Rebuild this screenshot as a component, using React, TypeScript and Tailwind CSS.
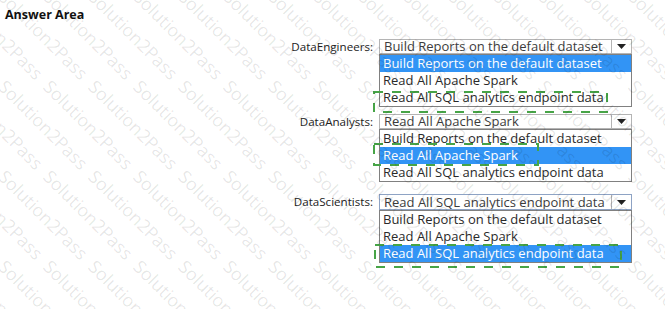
import React from "react";

const OPTIONS = [
  "Build Reports on the default dataset",
  "Read All Apache Spark",
  "Read All SQL analytics endpoint data",
];

type Box = { left: number; top: number; width: number; height: number };

function DashedBox({ box }: { box: Box }) {
  return (
    <svg
      className="absolute pointer-events-none z-20"
      style={{ left: box.left, top: box.top }}
      width={box.width}
      height={box.height}
    >
      <rect
        x={1}
        y={1}
        width={box.width - 2}
        height={box.height - 2}
        fill="none"
        stroke="#47a447"
        strokeWidth={2}
        strokeDasharray="9 9"
      />
    </svg>
  );
}

function Dropdown({
  selected,
  focused,
  box,
}: {
  selected: number;
  focused?: boolean;
  box: Box;
}) {
  return (
    <div className="relative w-[253px]">
      <div
        className={
          "flex h-[15px] items-center border bg-white " +
          (focused ? "h-[16px] border-[#8ea3c4]" : "border-[#b4b4b4]")
        }
      >
        <span className="flex-1 truncate pl-[4px] text-[13px] leading-[13px] text-[#3c3c3c]">
          {OPTIONS[selected]}
        </span>
        <span className="flex h-full w-[20px] items-center justify-center border-l border-[#b4b4b4]">
          <svg width="9" height="5" viewBox="0 0 9 5">
            <path d="M0 0 H9 L4.5 5 Z" fill="#222" />
          </svg>
        </span>
      </div>
      <div className="border border-[#808080] bg-white">
        {OPTIONS.map((o, i) => (
          <div
            key={o}
            className={
              "h-[17px] pl-[3px] text-[13px] leading-[17px] " +
              (i === selected ? "bg-[#3294f5] text-white" : "text-[#2a2a2a]")
            }
          >
            {o}
          </div>
        ))}
      </div>
      <DashedBox box={box} />
    </div>
  );
}

function Row({
  label,
  selected,
  focused,
  box,
  className,
}: {
  label: string;
  selected: number;
  focused?: boolean;
  box: Box;
  className?: string;
}) {
  return (
    <div className={"flex items-start gap-[6px] " + (className ?? "")}>
      <div className="w-[373px] text-right text-[11.6px] leading-[15px] text-[#222]">{label}</div>
      <Dropdown selected={selected} focused={focused} box={box} />
    </div>
  );
}

function Watermark() {
  const marks: { x: number; y: number }[] = [];
  for (let r = -3; r < 4; r++) {
    for (let c = -4; c < 17; c++) {
      marks.push({ x: 2 + c * 45, y: 83 + r * 90 });
    }
  }
  return (
    <div className="pointer-events-none absolute inset-0 z-30 overflow-hidden">
      {marks.map((m, i) => (
        <span
          key={i}
          className="absolute origin-left rotate-45 whitespace-nowrap text-[18px] leading-[18px] text-black/[0.1]"
          style={{ left: m.x, top: m.y - 9 }}
        >
          Solution2Pass
        </span>
      ))}
    </div>
  );
}

export default function App() {
  return (
    <div className="relative h-[309px] w-[665px] overflow-hidden bg-white font-['Segoe_UI','Open_Sans',sans-serif]">
      <div className="pl-[5px] pt-[7px] text-[12.5px] font-bold leading-[16px] text-[#111]">Answer Area</div>
      <div className="mt-[16px] flex flex-col">
        <Row
          label="DataEngineers:"
          selected={0}
          box={{ left: -6, top: 52, width: 235, height: 22 }}
        />
        <Row
          className="mt-[7px]"
          label="DataAnalysts:"
          selected={1}
          box={{ left: -6, top: 29, width: 166, height: 23 }}
        />
        <Row
          className="mt-[12px]"
          label="DataScientists:"
          selected={2}
          focused
          box={{ left: -5, top: 50, width: 248, height: 24 }}
        />
      </div>
      <Watermark />
    </div>
  );
}
